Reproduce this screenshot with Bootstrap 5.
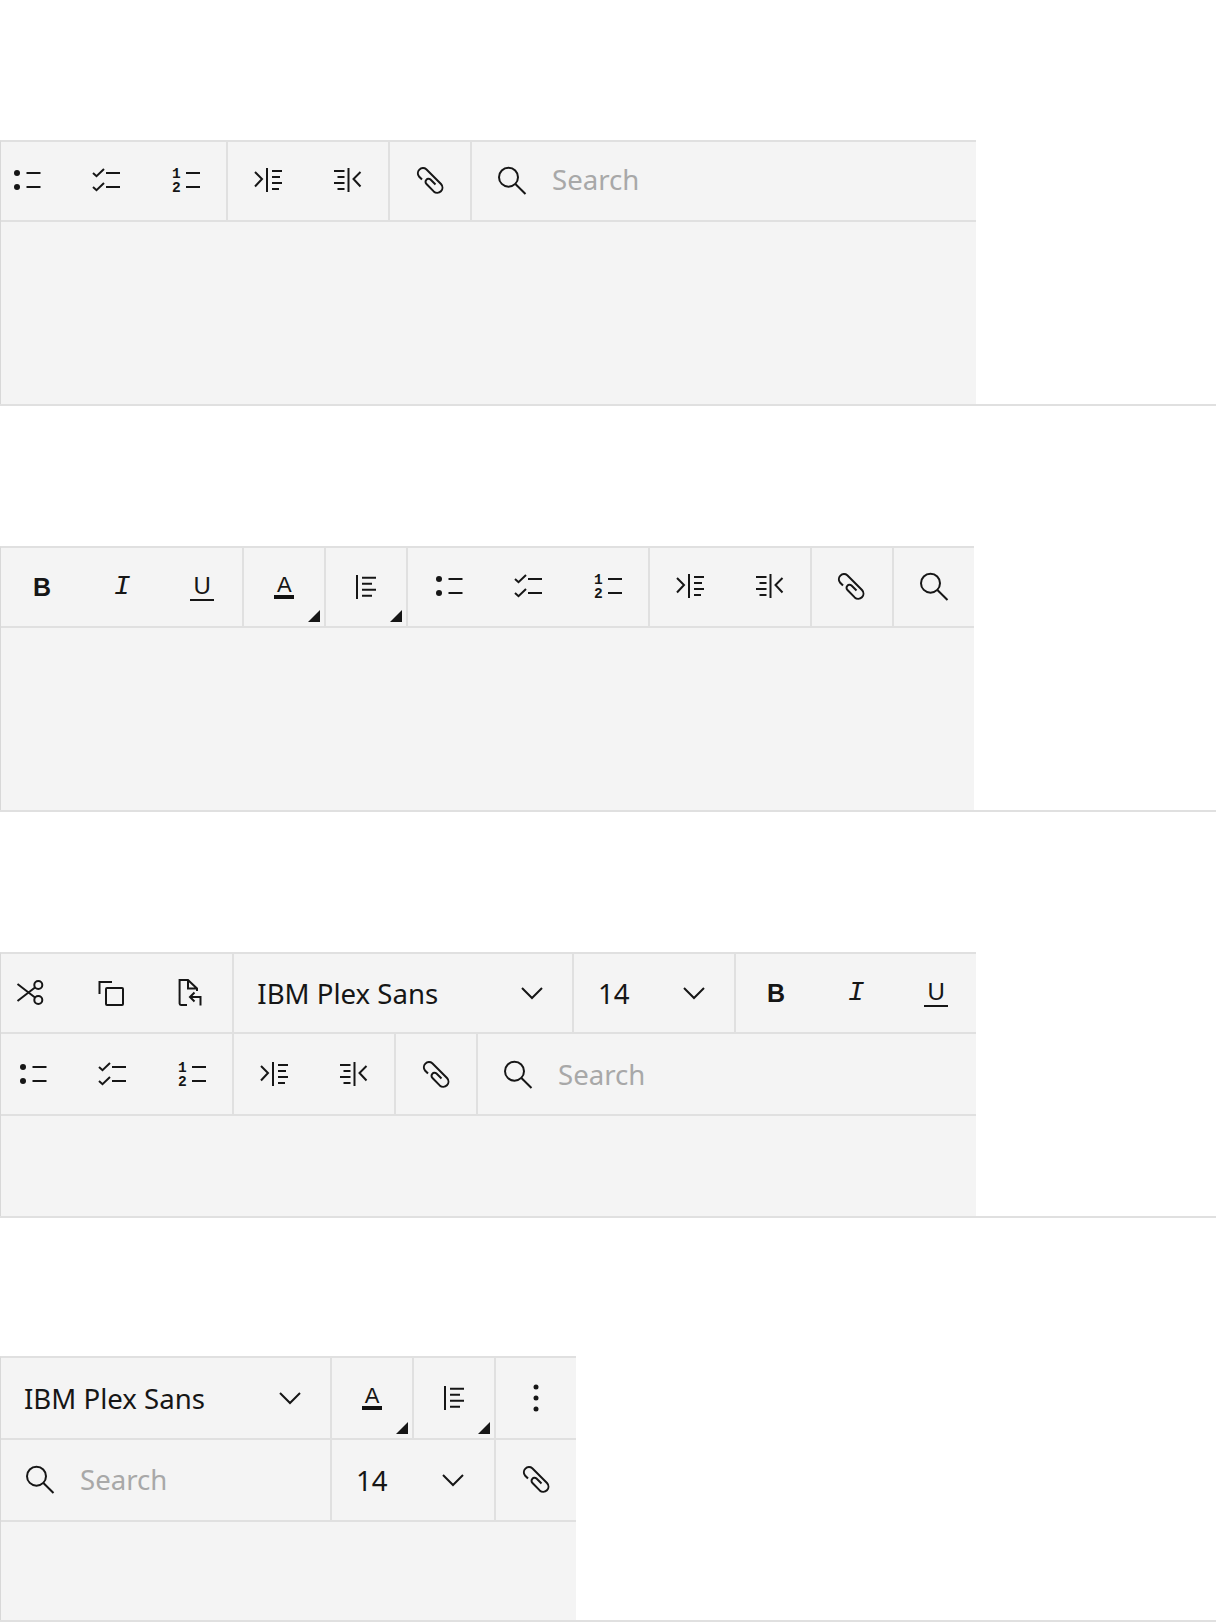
<!DOCTYPE html>
<html lang="en">
<head>
<meta charset="utf-8">
<title>Toolbars</title>
<link href="https://cdn.jsdelivr.net/npm/bootstrap@5.3.0/dist/css/bootstrap.min.css" rel="stylesheet">
<style>
body{background:#fff;color:#161616;font-family:"Noto Sans","Liberation Sans",sans-serif;margin:0}
.demo-sec{border-bottom:2px solid #e0e0e0;height:406px;padding-top:140px}
.demo-sec.s4{padding-top:138px;height:404px}
.tb{background:#f4f4f4;border-left:1px solid #d8d8d8;border-top:2px solid #e0e0e0;overflow:hidden;height:100%}
.w976{width:976px}.w974{width:974px}.w576{width:576px}
.tb-row{height:80px;border-bottom:2px solid #e0e0e0;flex-wrap:nowrap}
.tb-row.tall{height:82px}
.grp{border-left:2px solid #e0e0e0;flex:none;display:flex;height:100%}
.grp.nb{border-left:0}
.off15{margin-left:-15px}.off9{margin-left:-9px}.on1{margin-left:1px}
.ib{width:80.1px;flex:none;height:100%;display:flex;align-items:center;justify-content:center;position:relative}
.ib svg{width:32px;height:32px;display:block;overflow:visible;fill:none;stroke:#161616;stroke-width:2}
.ib.thin{width:79.1px;padding-left:2px}
.ib.tight{width:79.77px}
.ib.nudge{padding-left:2px}
.lower svg{position:relative;top:1px}
.corner::after{content:"";position:absolute;right:4px;bottom:4px;border-style:solid;border-width:0 0 12px 12px;border-color:transparent transparent #161616 transparent}
.sel{display:flex;align-items:center;height:100%;font-size:27.6px;line-height:1;flex:none;position:relative}
.sel span{position:relative;top:1px}
.sel svg{width:32px;height:32px;fill:none;stroke:#161616;stroke-width:2;position:absolute;top:50%;margin-top:-16px}
.sel-font{width:337.7px;padding-left:23px}.sel-font svg{right:24px}
.sel-size{width:160px;padding-left:24px}.sel-size svg{right:24px}
.sel-size2{width:162.2px}.sel-size2 svg{right:25px}
.sel-font2{width:329px;padding-left:23px}.sel-font2 svg{right:24px}
.srch{display:flex;align-items:center;height:100%;flex:1 1 auto;min-width:0;padding-left:24.5px;font-size:27.6px;color:#a8a8a8}
.srch span{position:relative;top:-1px}
.lower .srch span{top:1px}
.srch svg{width:32px;height:32px;fill:none;stroke:#161616;stroke-width:2;flex:none;margin-right:24px}
.srch2{width:329px;flex:none;padding-left:23px}
.srch2 svg{margin-right:24px}
.srch2 span{top:0}
.glyph{font-family:"Liberation Sans",sans-serif;color:#161616;line-height:1;display:inline-block;text-align:center}
.gb{font-weight:700;font-size:25px}
.gi{font-family:"Liberation Mono",monospace;font-style:italic;font-size:28px}
.gu{font-size:24px;border-bottom:2px solid #161616;width:24px;padding-bottom:1px;height:27px}
.ga{font-size:22px;border-bottom:4px solid #111;width:20px;height:24px;line-height:20px}
</style>
</head>
<body>
<svg width="0" height="0" class="d-block position-absolute" aria-hidden="true">
<defs>
<symbol id="i-bul" viewBox="0 0 32 32"><circle fill="#161616" stroke="none" cx="7" cy="8" r="3"/><circle fill="#161616" stroke="none" cx="7" cy="22" r="3"/><path d="M16.500 8h14M16.500 22h14"/></symbol>
<symbol id="i-chk" viewBox="0 0 32 32"><path d="M3 8l3.500 3.200L14 4M3 22l3.500 3.200L14 18M16 8h14M16 22h14"/></symbol>
<symbol id="i-num" viewBox="0 0 32 32"><text x="2" y="12.800" fill="#161616" stroke="none" font-family="Liberation Mono" font-weight="700" font-size="14.500">1</text><text x="2" y="27.200" fill="#161616" stroke="none" font-family="Liberation Mono" font-weight="700" font-size="14.500">2</text><path d="M16 8h14M16 22h14"/></symbol>
<symbol id="i-ind" viewBox="0 0 32 32"><path d="M3 7l7 7-7 7.500M15 3v24M20 6h10M20 12h8M20 18h10M20 24h7"/></symbol>
<symbol id="i-out" viewBox="0 0 32 32"><path d="M28.500 7l-7 7 7 7.500M16.500 3v24M2 6h10.500M5.500 12h7M2 18h10.500M5.500 24h7"/></symbol>
<symbol id="i-clip" viewBox="0 0 32 32"><path d="M7 14.500L4 11.500A5.200 5.200 0 0 1 11.300 4.200L26 19A5.200 5.200 0 0 1 18.700 26.400L11.500 19A2.900 2.900 0 0 1 15.500 14.600L20.500 19.500"/></symbol>
<symbol id="i-srch" viewBox="0 0 32 32"><circle cx="12.500" cy="12.200" r="9.500"/><path d="M19.400 19L29.500 29"/></symbol>
<symbol id="i-align" viewBox="0 0 32 32"><path d="M7 4v24M12 6.700h14M12 12.700h10M12 18.700h14M12 24.700h10"/></symbol>
<symbol id="i-cut" viewBox="0 0 32 32"><circle cx="22.300" cy="8" r="4"/><circle cx="22.300" cy="23" r="4"/><path d="M1.500 7L19 20.500M1.500 24L19 10.500"/></symbol>
<symbol id="i-copy" viewBox="0 0 32 32"><rect x="10" y="11" width="17" height="17" rx="1"/><path d="M3.500 17V5H16"/></symbol>
<symbol id="i-paste" viewBox="0 0 32 32"><path d="M11 28H5a1.400 1.400 0 0 1-1.400-1.400V3H12l9 8.500V14M12 3v8.500h9M24.500 28.500V20H14M18.500 15.500L14 20l4.500 4.500"/></symbol>
<symbol id="i-chev" viewBox="0 0 32 32"><path d="M6 11l10 10 10-10"/></symbol>
<symbol id="i-dots" viewBox="0 0 32 32"><circle fill="#161616" stroke="none" cx="16" cy="5" r="2.500"/><circle fill="#161616" stroke="none" cx="16" cy="16" r="2.500"/><circle fill="#161616" stroke="none" cx="16" cy="27" r="2.500"/></symbol>
</defs>
</svg>

<section class="demo-sec">
<div class="tb w976">
<div class="tb-row d-flex">
<div class="grp nb off15">
<div class="ib"><svg><use href="#i-bul"/></svg></div><div class="ib"><svg><use href="#i-chk"/></svg></div><div class="ib"><svg><use href="#i-num"/></svg></div>
</div>
<div class="grp"><div class="ib"><svg><use href="#i-ind"/></svg></div><div class="ib"><svg><use href="#i-out"/></svg></div></div>
<div class="grp"><div class="ib thin"><svg><use href="#i-clip"/></svg></div></div>
<div class="grp srch"><svg><use href="#i-srch"/></svg><span>Search</span></div>
</div>
</div>
</section>

<section class="demo-sec">
<div class="tb w974">
<div class="tb-row d-flex">
<div class="grp nb on1">
<div class="ib"><span class="glyph gb">B</span></div><div class="ib"><span class="glyph gi">I</span></div><div class="ib"><span class="glyph gu">U</span></div>
</div>
<div class="grp"><div class="ib corner"><span class="glyph ga">A</span></div></div>
<div class="grp"><div class="ib corner"><svg><use href="#i-align"/></svg></div></div>
<div class="grp"><div class="ib tight"><svg><use href="#i-bul"/></svg></div><div class="ib tight"><svg><use href="#i-chk"/></svg></div><div class="ib tight"><svg><use href="#i-num"/></svg></div></div>
<div class="grp"><div class="ib"><svg><use href="#i-ind"/></svg></div><div class="ib"><svg><use href="#i-out"/></svg></div></div>
<div class="grp"><div class="ib"><svg><use href="#i-clip"/></svg></div></div>
<div class="grp"><div class="ib"><svg><use href="#i-srch"/></svg></div></div>
</div>
</div>
</section>

<section class="demo-sec">
<div class="tb w976">
<div class="tb-row d-flex">
<div class="grp nb off9">
<div class="ib"><svg><use href="#i-cut"/></svg></div><div class="ib"><svg><use href="#i-copy"/></svg></div><div class="ib"><svg><use href="#i-paste"/></svg></div>
</div>
<div class="grp"><div class="sel sel-font"><span>IBM Plex Sans</span><svg><use href="#i-chev"/></svg></div></div>
<div class="grp"><div class="sel sel-size"><span>14</span><svg><use href="#i-chev"/></svg></div></div>
<div class="grp"><div class="ib"><span class="glyph gb">B</span></div><div class="ib"><span class="glyph gi">I</span></div><div class="ib"><span class="glyph gu">U</span></div></div>
</div>
<div class="tb-row tall lower d-flex">
<div class="grp nb off9">
<div class="ib"><svg><use href="#i-bul"/></svg></div><div class="ib"><svg><use href="#i-chk"/></svg></div><div class="ib"><svg><use href="#i-num"/></svg></div>
</div>
<div class="grp"><div class="ib"><svg><use href="#i-ind"/></svg></div><div class="ib"><svg><use href="#i-out"/></svg></div></div>
<div class="grp"><div class="ib thin"><svg><use href="#i-clip"/></svg></div></div>
<div class="grp srch"><svg><use href="#i-srch"/></svg><span>Search</span></div>
</div>
</div>
</section>

<section class="demo-sec s4">
<div class="tb w576">
<div class="tb-row tall d-flex">
<div class="grp nb"><div class="sel sel-font2"><span>IBM Plex Sans</span><svg><use href="#i-chev"/></svg></div></div>
<div class="grp"><div class="ib corner"><span class="glyph ga">A</span></div></div>
<div class="grp"><div class="ib corner"><svg><use href="#i-align"/></svg></div></div>
<div class="grp"><div class="ib"><svg><use href="#i-dots"/></svg></div></div>
</div>
<div class="tb-row tall d-flex">
<div class="grp nb srch srch2"><svg><use href="#i-srch"/></svg><span>Search</span></div>
<div class="grp"><div class="sel sel-size sel-size2"><span>14</span><svg><use href="#i-chev"/></svg></div></div>
<div class="grp"><div class="ib nudge"><svg><use href="#i-clip"/></svg></div></div>
</div>
</div>
</section>
</body>
</html>
